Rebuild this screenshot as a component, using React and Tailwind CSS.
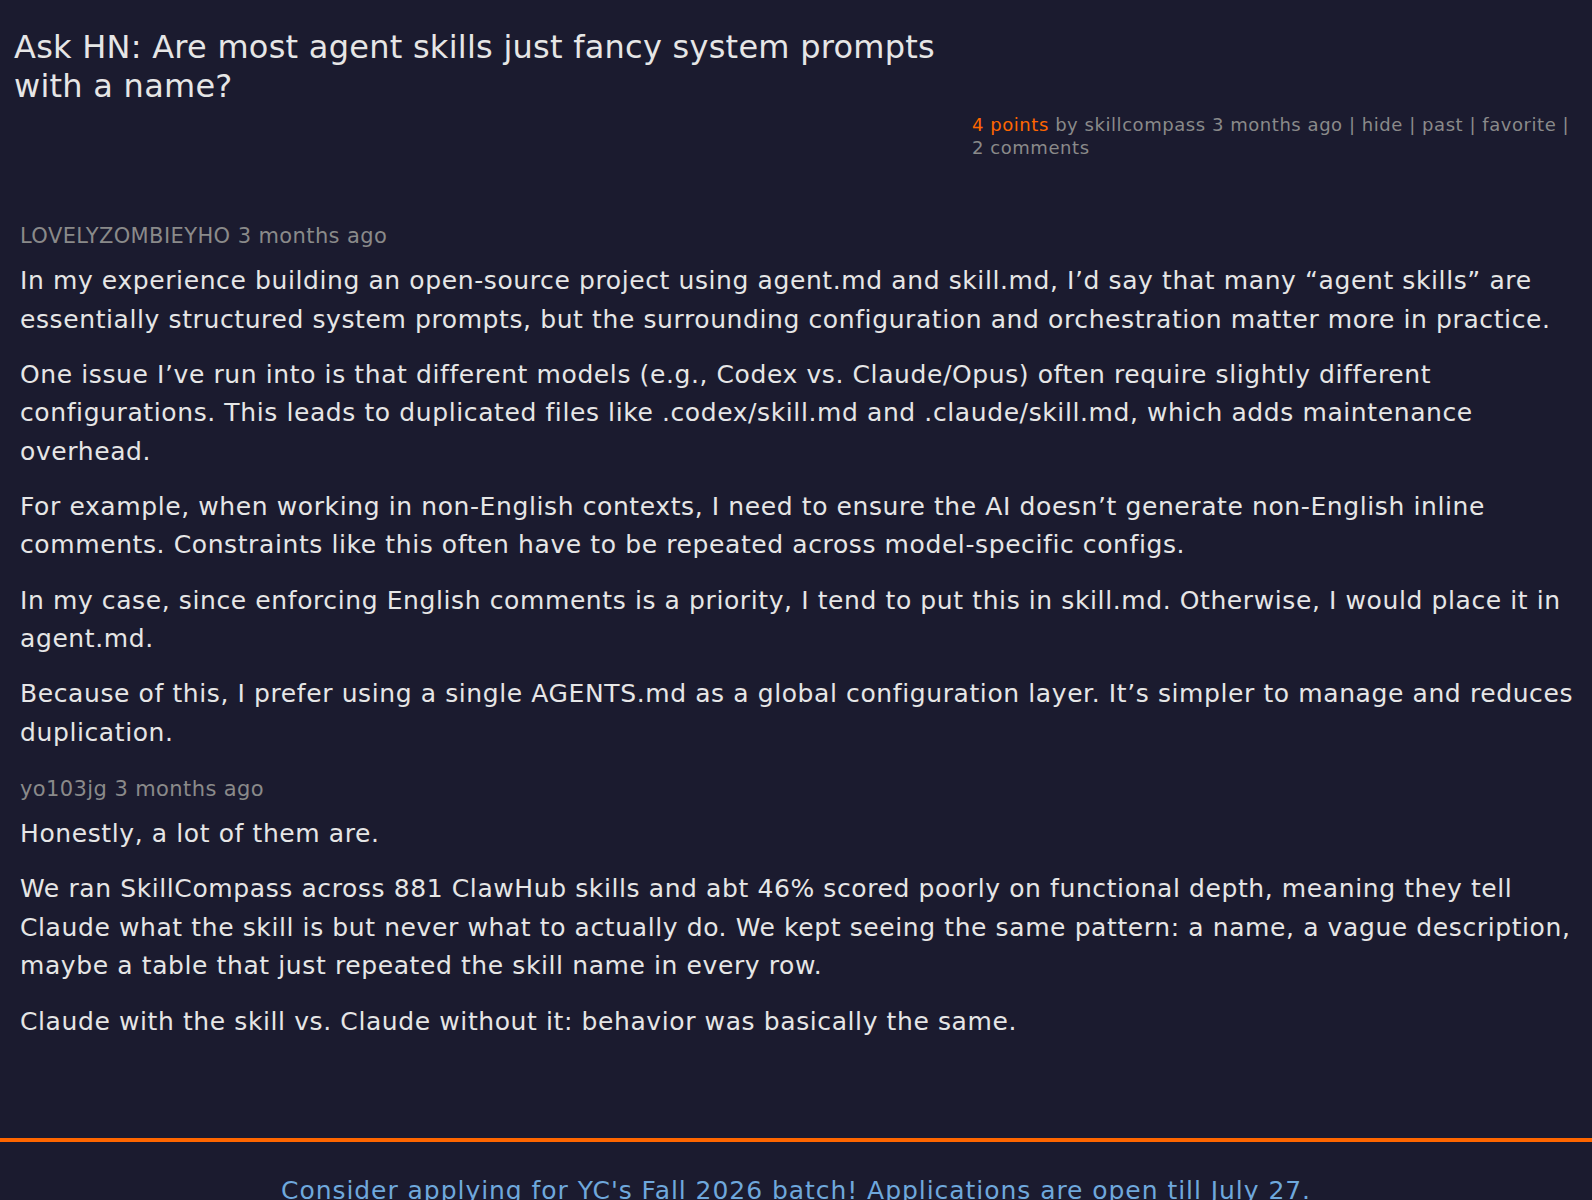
import React from 'react';

const comments = [
  {
    user: 'LOVELYZOMBIEYHO',
    age: '3 months ago',
    paragraphs: [
      'In my experience building an open-source project using agent.md and skill.md, I\u2019d say that many \u201cagent skills\u201d are essentially structured system prompts, but the surrounding configuration and orchestration matter more in practice.',
      'One issue I\u2019ve run into is that different models (e.g., Codex vs. Claude/Opus) often require slightly different configurations. This leads to duplicated files like .codex/skill.md and .claude/skill.md, which adds maintenance overhead.',
      'For example, when working in non-English contexts, I need to ensure the AI doesn\u2019t generate non-English inline comments. Constraints like this often have to be repeated across model-specific configs.',
      'In my case, since enforcing English comments is a priority, I tend to put this in skill.md. Otherwise, I would place it in agent.md.',
      'Because of this, I prefer using a single AGENTS.md as a global configuration layer. It\u2019s simpler to manage and reduces duplication.',
    ],
  },
  {
    user: 'yo103jg',
    age: '3 months ago',
    paragraphs: [
      'Honestly, a lot of them are.',
      'We ran SkillCompass across 881 ClawHub skills and abt 46% scored poorly on functional depth, meaning they tell Claude what the skill is but never what to actually do. We kept seeing the same pattern: a name, a vague description, maybe a table that just repeated the skill name in every row.',
      'Claude with the skill vs. Claude without it: behavior was basically the same.',
    ],
  },
];

const Comment = ({ user, age, paragraphs }) => (
  <div className="mb-[23px]">
    <div className="text-[21px] leading-[28px] tracking-[0.4px] text-[#8a8a8a] mb-[12px]">
      {user} {age}
    </div>
    {paragraphs.map((p, i) => (
      <p key={i} className="text-[25px] leading-[38.5px] tracking-[0.6px] text-[#e6e6e6] mb-[16.7px]">
        {p}
      </p>
    ))}
  </div>
);

export default function App() {
  return (
    <div
      className="bg-[#1b1b2f] min-h-screen overflow-hidden"
      style={{ fontFamily: '"DejaVu Sans", Verdana, sans-serif' }}
    >
      {/* Story header */}
      <div className="pl-[14px] pt-[28px]">
        <h1 className="w-[960px] text-[32px] leading-[38.5px] tracking-[0.25px] text-[#e6e6e6] font-normal">
          Ask HN: Are most agent skills just fancy system prompts with a name?
        </h1>
      </div>
      <div className="flex justify-end pr-[18px] mt-[8px]">
        <div className="w-[602px] text-[18px] leading-[23px] tracking-[0.55px] text-[#8a8a8a]">
          <span className="text-[#ff6600]">4 points</span> by skillcompass 3 months ago | hide | past | favorite | 2 comments
        </div>
      </div>

      {/* Comment thread */}
      <div className="pl-[20px] pr-[12px] mt-[63px]">
        {comments.map((c) => (
          <Comment key={c.user} {...c} />
        ))}
      </div>

      {/* Footer */}
      <div className="mt-[97px] border-t-4 border-[#ff6600] pt-[30px] text-center">
        <a className="text-[25px] tracking-[0.95px] text-[#6fa8dc]">
          Consider applying for YC's Fall 2026 batch! Applications are open till July 27.
        </a>
      </div>
    </div>
  );
}
